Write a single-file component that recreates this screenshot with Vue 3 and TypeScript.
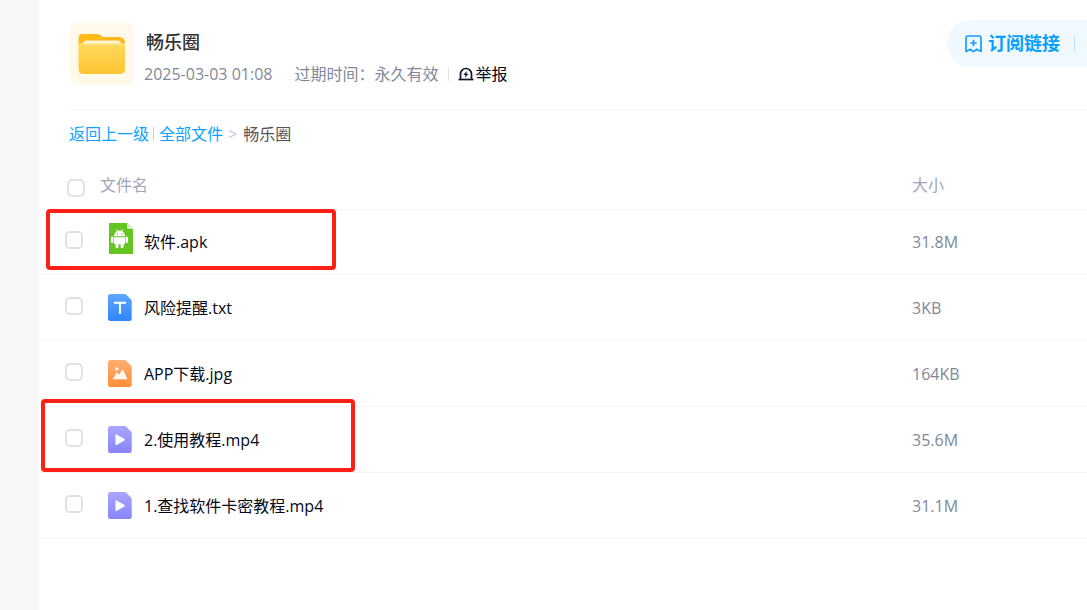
<script setup lang="ts">
import { ref } from 'vue'

type Kind = 'apk' | 'txt' | 'jpg' | 'mp4'
interface FileRow {
  name: string
  size: string
  kind: Kind
  mark?: string
}

const files: FileRow[] = [
  { name: '软件.apk', size: '31.8M', kind: 'apk', mark: 'mark-app' },
  { name: '风险提醒.txt', size: '3KB', kind: 'txt' },
  { name: 'APP下载.jpg', size: '164KB', kind: 'jpg' },
  { name: '2.使用教程.mp4', size: '35.6M', kind: 'mp4', mark: 'mark-video' },
  { name: '1.查找软件卡密教程.mp4', size: '31.1M', kind: 'mp4' },
]
const selected = ref<string[]>([])

function toggleAll(event: Event) {
  const on = (event.target as HTMLInputElement).checked
  selected.value = on ? files.map((f) => f.name) : []
}
</script>

<template>
  <div class="page">
    <main class="panel">
      <header class="head">
        <div class="folder">
          <svg width="48" height="42" viewBox="0 0 48 42" aria-hidden="true">
            <defs>
              <linearGradient id="folder-front" x1="0" y1="0" x2="0" y2="1">
                <stop offset="0" stop-color="#ffd95c" />
                <stop offset="1" stop-color="#ffc533" />
              </linearGradient>
            </defs>
            <path d="M0.500 13V5Q0.500 1 4.500 1H19Q21 1 22.500 2.200L24 3.400Q25 4 27 4H41Q47 4 47 10V13Z" fill="#ffb919" />
            <path d="M5 11Q5 7.500 9 7.500H39Q43 7.500 43 11V13H5Z" fill="#fff3d2" />
            <path d="M0.500 10.500H47V36Q47 41 42 41H5.500Q0.500 41 0.500 36Z" fill="url(#folder-front)" />
            <path d="M0.500 11H47" stroke="#ffe9a0" />
          </svg>
        </div>
        <div class="info">
          <h1>畅乐圈</h1>
          <div class="meta">
            <span class="date">2025-03-03 01:08</span>
            <span class="expiry">过期时间：永久有效</span>
            <button type="button" class="report">
              <svg width="16" height="15" viewBox="0 0 16 15" aria-hidden="true">
                <path d="M2.500 12V7.200A5.500 5.700 0 0 1 13.500 7.200V12" fill="none" stroke="#111827" stroke-width="1.700" />
                <path d="M0.500 12.500H15.500" stroke="#111827" stroke-width="1.700" />
                <path d="M8.700 4L5.300 8H7.400L7 10.800L10.600 6.700H8.400Z" fill="#111827" />
              </svg>
              <span>举报</span>
            </button>
          </div>
        </div>
        <button type="button" class="subscribe">
          <svg width="17" height="18" viewBox="0 0 17 18" aria-hidden="true">
            <path d="M1 3Q1 1 3 1H14Q16 1 16 3V16.500L11.500 14.300L8.500 16.700L5.500 14.300L1 16.500Z" fill="none" stroke="#189df5" stroke-width="1.700" stroke-linejoin="round" />
            <path d="M8.500 4.800V11.200M5.300 8H11.700" stroke="#189df5" stroke-width="1.700" />
          </svg>
          <span>订阅链接</span>
        </button>
      </header>

      <nav class="crumbs">
        <a href="#up">返回上一级</a>
        <i class="bar"></i>
        <a href="#all">全部文件</a>
        <span class="arrow">&gt;</span>
        <span>畅乐圈</span>
      </nav>

      <table>
        <thead>
          <tr>
            <th class="pick">
              <input type="checkbox" aria-label="全选" :checked="selected.length === files.length" @change="toggleAll" />
            </th>
            <th class="name">文件名</th>
            <th class="size">大小</th>
          </tr>
        </thead>
        <tbody>
          <tr v-for="file in files" :key="file.name">
            <td class="pick">
              <input v-model="selected" type="checkbox" :value="file.name" :aria-label="file.name" />
              <span v-if="file.mark" class="mark" :class="file.mark"></span>
            </td>
            <td class="name">
              <div class="entry">
                <svg v-if="file.kind === 'apk'" class="icon apk" width="24" height="31" viewBox="0 0 24 31" aria-hidden="true">
                  <path d="M0 0H18L24 6V31H0Z" fill="#64c420" />
                  <path d="M18 0L24 6H19Q18 6 18 5Z" fill="#d3f0bc" />
                  <path d="M4.800 13.300Q5.100 9.800 7.900 8.200L6.900 6.700L7.500 6.300L8.700 7.800Q10.500 7.200 12.400 7.800L13.600 6.300L14.200 6.700L13.200 8.200Q16 9.800 16.300 13.300Z" fill="#fff" />
                  <path d="M4.800 14.200H16.300V20Q16.300 21.200 15.200 21.200H14.600V23.800A1.500 1.500 0 0 1 11.600 23.800V21.200H9.500V23.800A1.500 1.500 0 0 1 6.500 23.800V21.200H6Q4.800 21.200 4.800 20Z" fill="#fff" />
                  <rect x="2" y="13.500" width="2.400" height="6.500" rx="1.200" fill="#fff" />
                  <rect x="16.700" y="13.500" width="2.400" height="6.500" rx="1.200" fill="#fff" />
                  <circle cx="8.300" cy="11" r="0.700" fill="#64c420" />
                  <circle cx="12.900" cy="11" r="0.700" fill="#64c420" />
                </svg>
                <svg v-else class="icon" width="24" height="28" viewBox="0 0 24 28" aria-hidden="true">
                  <defs>
                    <linearGradient id="fill-txt" x1="0" y1="0" x2="0" y2="1">
                      <stop offset="0" stop-color="#60a5ff" />
                      <stop offset="1" stop-color="#2e86fb" />
                    </linearGradient>
                    <linearGradient id="fill-jpg" x1="0" y1="0" x2="0" y2="1">
                      <stop offset="0" stop-color="#ffae70" />
                      <stop offset="1" stop-color="#ff8f38" />
                    </linearGradient>
                    <linearGradient id="fill-mp4" x1="0" y1="0" x2="0" y2="1">
                      <stop offset="0" stop-color="#aaa6ff" />
                      <stop offset="1" stop-color="#8884fb" />
                    </linearGradient>
                  </defs>
                  <path d="M2.500 0H16.500Q17.500 0 18.300 0.800L23 5.500Q23.700 6.200 23.700 7.300V24.500Q23.700 27 21.200 27H2.500Q0 27 0 24.500V2.500Q0 0 2.500 0Z" :fill="`url(#fill-${file.kind})`" />
                  <path v-if="file.kind === 'txt'" d="M6 8.800H18M12 8.800V20" fill="none" stroke="#fff" stroke-width="1.900" />
                  <template v-else-if="file.kind === 'jpg'">
                    <circle cx="8.800" cy="8.900" r="1.700" fill="#fff" />
                    <path d="M4.500 19.200L8.500 12.800Q9 12.100 9.600 12.800L11.300 14.800L14 10Q14.600 9.100 15.200 10L19.500 19.200Z" fill="#fff" fill-opacity="0.930" />
                  </template>
                  <path v-else d="M7.500 9Q7.500 7.900 8.500 8.500L16.500 13Q17.400 13.700 16.500 14.400L8.500 18.900Q7.500 19.500 7.500 18.400Z" fill="#fff" />
                </svg>
                <span>{{ file.name }}</span>
              </div>
            </td>
            <td class="size">{{ file.size }}</td>
          </tr>
        </tbody>
      </table>
    </main>
  </div>
</template>

<style>
body {
  margin: 0;
  background: #f7f7f7;
}
</style>

<style scoped>
.page {
  min-height: 100vh;
  padding-left: 39px;
  box-sizing: border-box;
  display: flex;
  overflow: hidden;
  font-family: "Open Sans", "Noto Sans CJK SC", sans-serif;
  font-size: 16px;
  line-height: 24px;
  color: #03081a;
}
.panel {
  flex: 1;
  background: #fff;
}
button {
  border: 0;
  padding: 0;
  background: none;
  font: inherit;
  color: inherit;
  cursor: pointer;
}
.head {
  display: flex;
  align-items: flex-start;
  margin-left: 31px;
  padding-top: 20px;
  height: 89px;
  border-bottom: 1px solid #f3f4f6;
}
.folder {
  display: flex;
  align-items: center;
  justify-content: center;
  width: 63px;
  height: 62px;
  margin-top: 3px;
  border-radius: 6px;
  background: #fff9ea;
}
.info {
  flex: 1;
  padding-left: 11px;
  padding-top: 10px;
}
h1 {
  margin: 0 0 8px 2px;
  font-size: 18px;
  line-height: 24px;
  font-weight: 500;
  color: #333;
}
.meta {
  display: flex;
  align-items: center;
  color: #818999;
}
.expiry {
  margin-left: 22px;
  padding-right: 10px;
}
.report {
  display: flex;
  align-items: center;
  gap: 1px;
  color: #03081a;
}
.report::before {
  content: "";
  width: 1px;
  height: 14px;
  margin-right: 8px;
  background: #dfe2ea;
}
.subscribe {
  display: flex;
  align-items: center;
  gap: 6px;
  height: 47px;
  padding-left: 18px;
  padding-right: 12px;
  border-radius: 24px 0 0 24px;
  background: #f0f9ff;
  color: #06a0ff;
  font-size: 18px;
  font-weight: 700;
}
.subscribe span {
  padding-bottom: 2px;
}
.subscribe::after {
  content: "";
  width: 1px;
  height: 16px;
  margin-left: 8px;
  background: #b5e0ff;
}
.crumbs {
  display: flex;
  align-items: center;
  padding: 12px 30px;
  color: #555;
}
.crumbs a {
  color: #0da2ff;
  text-decoration: none;
}
.bar {
  width: 1px;
  height: 14px;
  margin: 0 5px 0 4px;
  background: #c8d2ea;
}
.arrow {
  margin: 0 6px 0 5px;
  color: #b9c8e8;
}
table {
  width: 100%;
  table-layout: fixed;
  border-collapse: separate;
  border-spacing: 0;
}
th,
td {
  box-sizing: border-box;
  height: 66px;
  padding: 0;
  border-bottom: 1px solid #f0f5fb;
  text-align: left;
  font-weight: 400;
}
tbody tr:first-child td {
  height: 65px;
}
th {
  height: 52px;
  padding-top: 3px;
  color: #a0a6b6;
}
.pick {
  position: relative;
  width: 61px;
  padding-left: 26px;
  line-height: 0;
}
td.pick {
  padding-bottom: 4px;
}
th.pick {
  padding-left: 28px;
  padding-top: 8px;
}
td.size {
  color: #818999;
}
.size {
  width: 175px;
}
input {
  appearance: none;
  box-sizing: border-box;
  width: 18px;
  height: 18px;
  margin: 0;
  border: 2px solid #e1e1e1;
  border-radius: 5px;
  background: #fff;
}
input:checked {
  border-color: #0da2ff;
  background: #0da2ff;
}
.entry {
  display: flex;
  align-items: center;
  gap: 12px;
  padding-left: 8px;
}
.apk {
  margin: 0 -1px 8px 1px;
}
.mark {
  position: absolute;
  z-index: 1;
  box-sizing: border-box;
  border: 4px solid #ff2015;
  border-radius: 4px;
  pointer-events: none;
}
.mark-app {
  left: 7px;
  top: -1px;
  width: 290px;
  height: 61px;
}
.mark-video {
  left: 2px;
  top: -8px;
  width: 314px;
  height: 73px;
}
</style>
